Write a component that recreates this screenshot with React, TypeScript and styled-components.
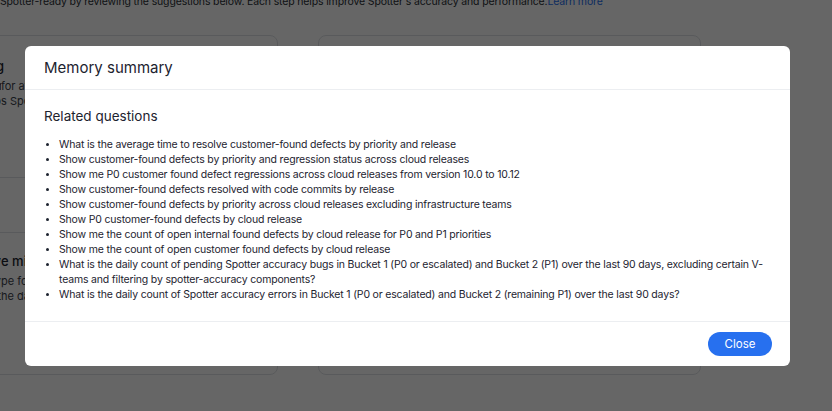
import React from 'react';
import styled, { createGlobalStyle } from 'styled-components';

const GlobalStyle = createGlobalStyle`
  html, body {
    margin: 0;
    padding: 0;
    background: #ffffff;
    overflow: hidden;
  }
  body {
    font-family: Inter, "Noto Sans", "Liberation Sans", sans-serif;
    color: #1d232f;
  }
`;

const questions = [
  'What is the average time to resolve customer-found defects by priority and release',
  'Show customer-found defects by priority and regression status across cloud releases',
  'Show me P0 customer found defect regressions across cloud releases from version 10.0 to 10.12',
  'Show customer-found defects resolved with code commits by release',
  'Show customer-found defects by priority across cloud releases excluding infrastructure teams',
  'Show P0 customer-found defects by cloud release',
  'Show me the count of open internal found defects by cloud release for P0 and P1 priorities',
  'Show me the count of open customer found defects by cloud release',
  'What is the daily count of pending Spotter accuracy bugs in Bucket 1 (P0 or escalated) and Bucket 2 (P1) over the last 90 days, excluding certain V-teams and filtering by spotter-accuracy components?',
  'What is the daily count of Spotter accuracy errors in Bucket 1 (P0 or escalated) and Bucket 2 (remaining P1) over the last 90 days?',
];

const App: React.FC = () => {
  return (
    <>
      <GlobalStyle />
      <Page>
        <Intro>
          Spotter-ready by reviewing the suggestions below. Each step helps improve Spotter's accuracy and
          performance.<IntroLink>Learn more</IntroLink>
        </Intro>
        <CardGrid>
          <LeftColumn>
            <Card>
              <CardTitle $end>Review column naming</CardTitle>
              <CardLine>
                <Lead>Add synonyms and descriptions </Lead>for attributes and measures
              </CardLine>
              <CardLine>
                <Lead>This help</Lead>s Spotter understand your data
              </CardLine>
            </Card>
            <Card $second>
              <CardTitle>
                <Lead>Resolv</Lead>e mismatched column types
              </CardTitle>
              <CardLine>
                <Lead>Change the data ty</Lead>pe for columns that do not match
              </CardLine>
              <CardLine>
                <Lead>values in t</Lead>he data source
              </CardLine>
            </Card>
          </LeftColumn>
          <Card $tall />
        </CardGrid>
      </Page>

      <Overlay>
        <Modal>
          <ModalHeader>Memory summary</ModalHeader>
          <ModalBody>
            <SectionTitle>Related questions</SectionTitle>
            <QuestionList>
              {questions.map((q, i) => (
                <li key={i}>{q}</li>
              ))}
            </QuestionList>
          </ModalBody>
          <ModalFooter>
            <CloseButton>Close</CloseButton>
          </ModalFooter>
        </Modal>
      </Overlay>
    </>
  );
};

const Page = styled.div`
  margin: -6px 0 0 -150px;
  width: 1000px;
`;

const Intro = styled.p`
  margin: 0 0 25px 150px;
  font-size: 10.5px;
  letter-spacing: -0.15px;
  line-height: 16px;
  white-space: nowrap;
  color: #2b2f36;
`;

const IntroLink = styled.span`
  color: #2770ef;
`;

const CardGrid = styled.div`
  display: grid;
  grid-template-columns: 428px 383px;
  gap: 40px;
`;

const LeftColumn = styled.div`
  display: flex;
  flex-direction: column;
  gap: 54px;
`;

const Card = styled.div<{ $tall?: boolean; $second?: boolean }>`
  border: 1px solid #dfe2e7;
  border-radius: 8px;
  padding: ${({ $second }) => ($second ? '19px' : '21px')} 20px 0 20px;
  height: ${({ $tall }) => ($tall ? '340px' : '143px')};
  box-sizing: border-box;
  overflow: hidden;
`;

const Lead = styled.span`
  display: inline-block;
  width: 130px;
  text-align: right;
  white-space: pre;
  overflow: hidden;
  vertical-align: top;
`;

const CardTitle = styled.div<{ $end?: boolean }>`
  font-size: 13px;
  font-weight: 500;
  line-height: 18px;
  margin-bottom: 4px;
  white-space: nowrap;
  width: ${({ $end }) => ($end ? '133px' : 'auto')};
  text-align: ${({ $end }) => ($end ? 'right' : 'left')};
  overflow: ${({ $end }) => ($end ? 'hidden' : 'visible')};
  direction: ${({ $end }) => ($end ? 'rtl' : 'ltr')};
`;

const CardLine = styled.div`
  font-size: 11px;
  line-height: 15px;
  color: #3c424c;
  white-space: nowrap;
`;

const Overlay = styled.div`
  position: fixed;
  inset: 0;
  background: rgba(0, 0, 0, 0.6);
  display: flex;
  align-items: center;
  justify-content: center;
  padding-right: 17px;
`;

const Modal = styled.div`
  width: 765px;
  background: #ffffff;
  border-radius: 6px;
  display: flex;
  flex-direction: column;
`;

const ModalHeader = styled.div`
  height: 44px;
  box-sizing: border-box;
  padding: 0 19px;
  display: flex;
  align-items: center;
  font-size: 15px;
  color: #1d232f;
  border-bottom: 1px solid #eceef1;
`;

const ModalBody = styled.div`
  padding: 16px 19px 19px;
  border-bottom: 1px solid #eceef1;
`;

const SectionTitle = styled.div`
  font-size: 13.5px;
  line-height: 20px;
  color: #1d232f;
  margin-bottom: 11px;
`;

const QuestionList = styled.ul`
  margin: 0;
  padding-left: 15px;
  font-size: 10.5px;
  letter-spacing: -0.18px;
  line-height: 15px;
  color: #1d232f;
  li::marker {
    font-size: 9px;
  }
`;

const ModalFooter = styled.div`
  height: 44px;
  box-sizing: border-box;
  padding: 0 18px;
  display: flex;
  align-items: center;
  justify-content: flex-end;
`;

const CloseButton = styled.button`
  width: 64px;
  height: 24px;
  border: none;
  border-radius: 12px;
  background: #2770ef;
  color: #ffffff;
  font-family: inherit;
  font-size: 11.5px;
  cursor: pointer;
`;

export default App;
